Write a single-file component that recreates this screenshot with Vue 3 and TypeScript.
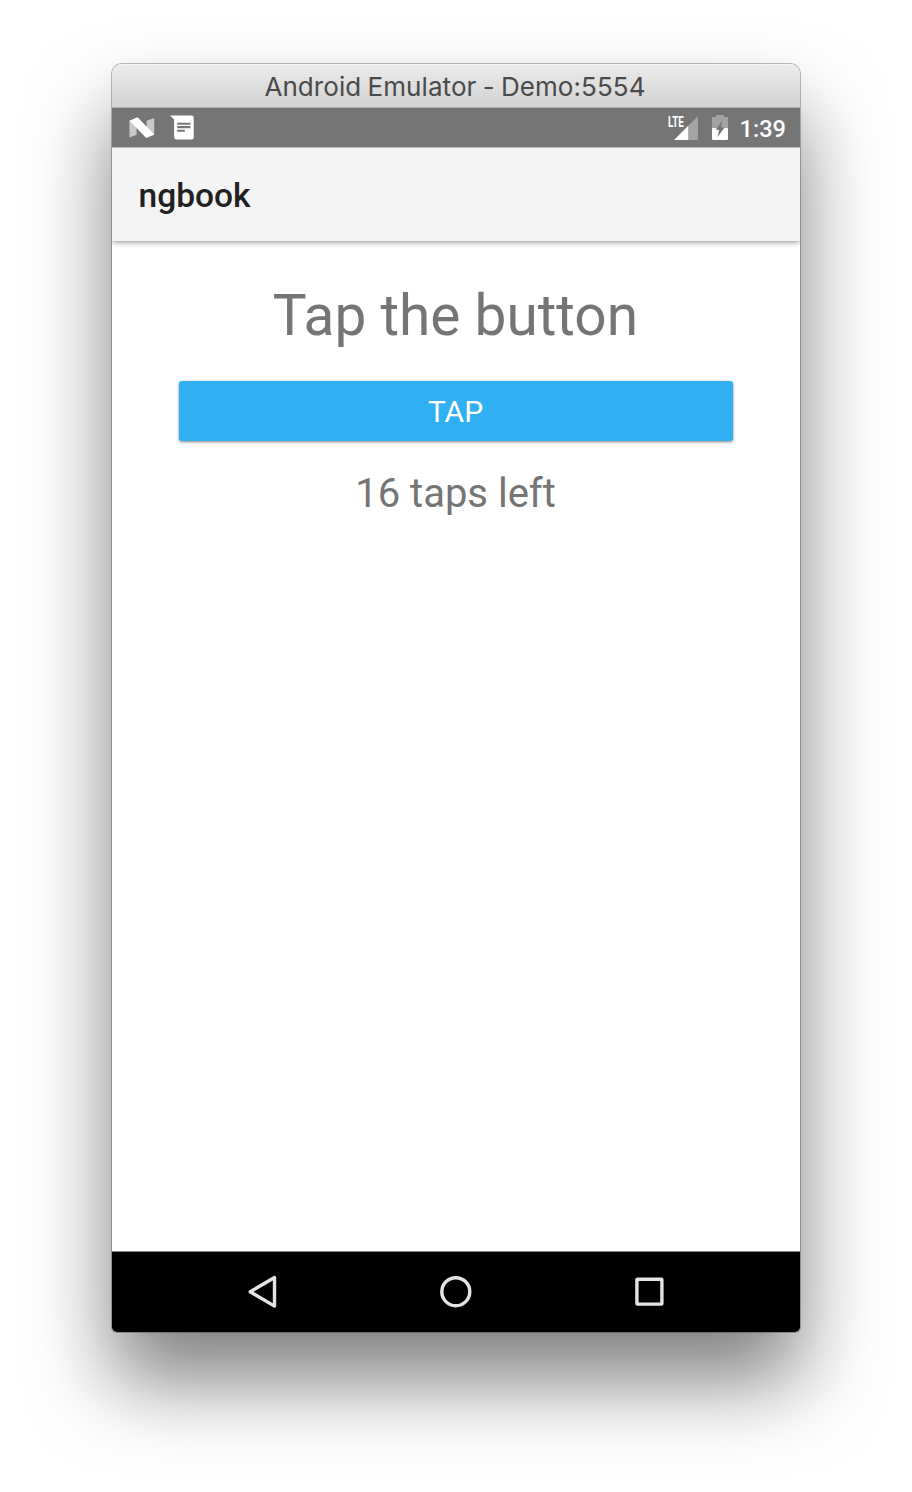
<script setup lang="ts">
import { ref } from 'vue'

const counter = ref<number>(16)

function onTap(): void {
  if (counter.value > 0) counter.value--
}
</script>

<template>
  <main class="desktop">
    <section class="window">
      <header class="titlebar"><span class="title">Android Emulator - Demo:5554</span></header>
      <div class="status">
        <svg class="ic-n" viewBox="0 0 26 22" width="26" height="22">
          <path d="M.4 3.8 7.6 1.2v16.6L.4 20.6zM17.6 3.8l7.6-2.7v17L17.6 20z" fill="#c9c9c9" />
          <path d="M.6 3.8 8.6.3 25.2 17.6 17.2 21z" fill="#fff" />
        </svg>
        <svg class="ic-msg" viewBox="0 0 24 25" width="24" height="25">
          <path d="M0 .5h21.5a2.2 2.2 0 0 1 2.2 2.2v19.6a2.2 2.2 0 0 1-2.2 2.2H6.3a2.2 2.2 0 0 1-2.2-2.2V4.5z" fill="#fff" />
          <path d="M7.2 8.7h13.3M7.2 12.1h13.3M7.2 15.7h7.6" stroke="#757575" stroke-width="2.1" />
        </svg>
        <div class="signal">
          <span class="lte">LTE</span>
          <svg viewBox="0 0 24 24" width="24" height="24">
            <path d="M24 0v24H14V10z" fill="#a3a3a3" />
            <path d="M0 24 14.2 9.8V24z" fill="#fff" />
          </svg>
        </div>
        <svg class="ic-bat" viewBox="0 0 16 25" width="16" height="25">
          <path d="M0 13V3.3q0-1.2 1.2-1.2H4V0h8v2.1h2.8q1.2 0 1.2 1.2V13z" fill="#a3a3a3" />
          <path d="M0 13h16v10.8q0 1.2-1.2 1.2H1.2Q0 25 0 23.8z" fill="#fff" />
          <path d="M10.4 5.7 3.5 14.8h3.6L5.6 22l7-9.5H9z" fill="#757575" />
        </svg>
        <span class="time">1:39</span>
      </div>
      <div class="actionbar"><h1>ngbook</h1></div>
      <div class="content">
        <p class="heading">Tap the button</p>
        <button class="tap" type="button" @click="onTap"><span>TAP</span></button>
        <p class="message">{{ counter }} taps left</p>
      </div>
      <nav class="navbar">
        <svg viewBox="0 0 32 36" width="32" height="36"><path d="M27.5 3.5v28.6L3.2 17.8z" /></svg>
        <svg viewBox="0 0 36 36" width="36" height="36"><circle cx="17.8" cy="17.7" r="14" /></svg>
        <svg viewBox="0 0 32 36" width="32" height="36"><rect x="3.9" y="5.3" width="25" height="24.8" rx=".5" /></svg>
      </nav>
    </section>
  </main>
</template>

<style>
body {
  background: #fff;
}
</style>

<style scoped>
.desktop {
  box-sizing: border-box;
  width: 912px;
  height: 1492px;
  padding: 64px 112px 0;
  overflow: hidden;
  font-family: Roboto, sans-serif;
}
.window {
  display: flex;
  flex-direction: column;
  height: 1268px;
  border-radius: 10px 10px 5px 5px;
  overflow: hidden;
  background: #fff;
  box-shadow: 0 0 0 1px rgba(0, 0, 0, 0.25), 0 49px 82px rgba(0, 0, 0, 0.5);
}
.titlebar {
  box-sizing: border-box;
  height: 44px;
  display: flex;
  justify-content: center;
  padding-right: 2px;
  background: linear-gradient(#ebebeb, #d2d2d2);
  border-top: 1px solid #f4f4f4;
  border-bottom: 1px solid #b0b0b0;
}
.title {
  font: 400 26px/44px Inter, sans-serif;
  word-spacing: -1.2px;
  letter-spacing: 0.08px;
  color: #4a4a4a;
  white-space: nowrap;
}
.status {
  position: relative;
  z-index: 1;
  height: 40px;
  display: flex;
  align-items: center;
  padding: 0 14px 0 17px;
  background: #757575;
  border-bottom: 1px solid #bdbdbd;
  color: #fff;
  box-sizing: border-box;
}
.ic-msg {
  margin-left: 15px;
}
.signal {
  position: relative;
  display: flex;
  margin-left: auto;
}
.lte {
  position: absolute;
  left: -6px;
  top: -1px;
  font: 700 14px/14px Roboto, sans-serif;
  transform: scaleX(0.7);
  transform-origin: 0 0;
}
.ic-bat {
  margin-left: 14px;
}
.time {
  margin-left: 12px;
  font-size: 23.6px;
  line-height: 38px;
  padding-top: 2px;
  font-weight: 500;
}
.actionbar {
  position: relative;
  height: 93px;
  padding-left: 26.5px;
  background: #f4f4f4;
  box-shadow: 0 1px 6px rgba(0, 0, 0, 0.45);
}
h1 {
  margin: 0;
  font-size: 33.5px;
  font-weight: 500;
  line-height: 96px;
  color: #212121;
}
.content {
  flex: 1;
  display: flex;
  flex-direction: column;
  padding: 41px 67.5px 0 66.5px;
  border-bottom: 1px solid #8a8a8a;
  color: #757575;
  text-align: center;
}
.heading {
  margin: 0;
  font-size: 56.8px;
  line-height: 68px;
}
.tap {
  height: 60px;
  margin-top: 31px;
  padding: 0;
  border: 0;
  border-radius: 3px;
  background: #30b0f2;
  color: #fff;
  font: 400 30px/62px Roboto, sans-serif;
  box-shadow: 0 1px 3px rgba(0, 0, 0, 0.5);
}
.message {
  margin: 29px 0 0;
  font-size: 40px;
  line-height: 48px;
}
.navbar {
  height: 80px;
  display: flex;
  align-items: center;
  justify-content: space-between;
  padding: 0 135px;
  background: #000;
}
.navbar svg {
  fill: none;
  stroke: #e4e4e4;
  stroke-width: 3.4;
  stroke-linejoin: round;
}
</style>
